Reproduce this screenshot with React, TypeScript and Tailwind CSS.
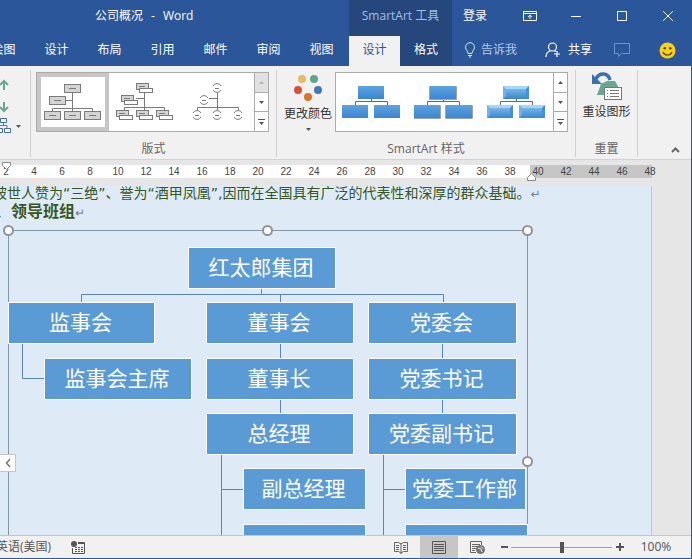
import React from "react";
import clsx from "clsx";

interface OrgNode {
	label: string;
	className: string;
}

const TABS = ["绘图", "设计", "布局", "引用", "邮件", "审阅", "视图"];
const RULER_INNER = [2, 4, 6, 8, 10, 12, 14, 16, 18, 20, 22, 24, 26, 28, 30, 32, 34, 36, 38];
const RULER_OUTER = [40, 42, 44, 46, 48];

// node positions are relative to the SmartArt canvas
const NODES: OrgNode[] = [
	{ label: "红太郎集团", className: "left-[180px] top-[17px] w-[148px]" },
	{ label: "监事会", className: "left-0 top-[72px] w-[147px]" },
	{ label: "董事会", className: "left-[198px] top-[72px] w-[148px]" },
	{ label: "党委会", className: "left-[360px] top-[72px] w-[149px]" },
	{ label: "监事会主席", className: "left-[36px] top-[128px] w-[148px]" },
	{ label: "董事长", className: "left-[198px] top-[128px] w-[148px]" },
	{ label: "党委书记", className: "left-[360px] top-[128px] w-[149px]" },
	{ label: "总经理", className: "left-[198px] top-[183px] w-[148px]" },
	{ label: "党委副书记", className: "left-[360px] top-[183px] w-[149px]" },
	{ label: "副总经理", className: "left-[235px] top-[238px] w-[123px]" },
	{ label: "党委工作部", className: "left-[397px] top-[238px] w-[121px]" },
	{ label: "", className: "left-[235px] top-[294px] w-[123px]" },
	{ label: "", className: "left-[397px] top-[294px] w-[123px]" },
];

const HANDLES = [
	"-left-[6px] -top-[6px]",
	"left-[253px] -top-[6px]",
	"-right-[6px] -top-[6px]",
	"-right-[6px] top-[225px]",
];

const WindowButton = ({ label, children }: { label: string; children: React.ReactNode }) => (
	<button type="button" aria-label={label} className="flex w-[46px] items-center justify-center">
		<svg width="14" height="12" viewBox="0 0 14 12" fill="none" stroke="#fff">
			{children}
		</svg>
	</button>
);

const TitleBar = () => (
	<div className="flex h-9 items-stretch text-white">
		<div className="flex w-[349px] shrink-0 items-center overflow-hidden pb-1 pl-[95px]">
			<h1 className="flex gap-2 text-xs">
				<span>公司概况</span>
				<span>-</span>
				<span>Word</span>
			</h1>
		</div>
		<div className="flex w-[103px] shrink-0 items-center justify-center bg-[#25477b] pb-1 text-[#a3bde3]">
			SmartArt 工具
		</div>
		<button type="button" className="px-[11px] pb-1">登录</button>
		<div className="ml-auto flex pb-1">
			<WindowButton label="功能区显示选项">
				<path d="M.5 1.5h13v9H.5zM.5 3.5h13M7 9V5M5 7l2-2 2 2" />
			</WindowButton>
			<WindowButton label="最小化">
				<path d="M2 6.5h10" />
			</WindowButton>
			<WindowButton label="最大化">
				<path d="M2.500 1.500h9v9h-9z" />
			</WindowButton>
			<WindowButton label="关闭">
				<path d="M2 1l10 10M12 1L2 11" />
			</WindowButton>
		</div>
	</div>
);

const TabRow = () => (
	<nav className="flex h-[30px] items-stretch text-white">
		<div className="-ml-[23px] flex w-[372px] shrink-0">
			{TABS.map((tab) => (
				<button key={tab} type="button" className="w-[53px] pb-0.5">
					{tab}
				</button>
			))}
		</div>
		<button type="button" className="w-[51px] shrink-0 bg-[#f1f1f1] pb-0.5 text-[#2b579a]">设计</button>
		<button type="button" className="w-[52px] shrink-0 bg-[#25477b] pb-0.5">格式</button>
		<button type="button" className="flex items-center gap-1 pb-0.5 pl-3 text-[#b3c8e8]">
			<svg width="12" height="16" viewBox="0 0 12 16" fill="none" stroke="#dbe6f6">
				<path d="M4 11.500C4 9 1.500 8 1.500 5.200a4.500 4.500 0 0 1 9 0C10.500 8 8 9 8 11.500zM4 13.500h4M5 15h2" />
			</svg>
			<span className="pl-px">告诉我</span>
		</button>
		<div className="ml-auto flex items-center pb-0.5 pr-[15px]">
			<button type="button" className="flex items-center gap-[7px]">
				<svg width="16" height="16" viewBox="0 0 16 16" fill="none" stroke="#fff" strokeWidth="1.200">
					<circle cx="7.500" cy="5" r="4" />
					<path d="M1 15c0-3.500 2-5.500 4.500-6.300M9.500 8.700l1.500.8M12 9v6M9 12h6" />
				</svg>
				共享
			</button>
			<button type="button" aria-label="批注" className="ml-[21px]">
				<svg width="18" height="16" viewBox="0 0 18 16" fill="none" stroke="#6f93cc">
					<path d="M1.500 1.500h15v10h-8l-3 3v-3h-4z" />
				</svg>
			</button>
			<button type="button" aria-label="反馈" className="ml-7">
				<svg width="17" height="17" viewBox="0 0 17 17">
					<circle cx="8.500" cy="8.500" r="8" fill="#fbd116" />
					<circle cx="5.700" cy="6.300" r="1.200" fill="#4a3c12" />
					<circle cx="11.300" cy="6.300" r="1.200" fill="#4a3c12" />
					<path d="M4 10c1.500 4 7.500 4 9 0" fill="none" stroke="#4a3c12" strokeWidth="1.200" />
				</svg>
			</button>
		</div>
	</nav>
);

const GalleryScroll = ({ topDisabled }: { topDisabled?: boolean }) => (
	<div className="flex w-[14px] shrink-0 flex-col divide-y divide-[#ababab] border-l border-[#ababab]">
		<button
			type="button"
			aria-label="上一行"
			className={clsx("flex flex-1 items-center justify-center", topDisabled && "bg-[#e1e1e1]")}
		>
			<svg width="5" height="3" viewBox="0 0 5 3" fill={topDisabled ? "#b5b5b5" : "#555"}>
				<path d="M0 3L2.500 0 5 3z" />
			</svg>
		</button>
		<button type="button" aria-label="下一行" className="flex flex-1 items-center justify-center">
			<svg width="5" height="3" viewBox="0 0 5 3" fill="#555">
				<path d="M0 0h5L2.500 3z" />
			</svg>
		</button>
		<button type="button" aria-label="其他" className="flex flex-1 items-center justify-center">
			<svg width="7" height="6" viewBox="0 0 7 6" fill="#555">
				<path d="M0 0h7v1H0zM1 3h5L3.500 6z" />
			</svg>
		</button>
	</div>
);

const BOXES = [[20, 0], [5, 12], [0, 27], [20, 27], [40, 27]];

const LayoutBoxes = () => (
	<svg width="58" height="37" viewBox="0 0 58 37" fill="none" stroke="#7b7b7b">
		<path d="M28.500 9v18M22 16.500h6M8.500 27v-2.500h40V27" />
		{BOXES.map(([x, y]) => (
			<g key={`${x}-${y}`}>
				<rect x={x + 0.5} y={y + 0.5} width="16" height="8" fill="#d4d4d4" />
				<path d={`M${x + 5} ${y + 4.5}h7`} />
			</g>
		))}
	</svg>
);

const LayoutNamed = () => (
	<svg width="58" height="38" viewBox="0 0 58 38" fill="none" stroke="#7b7b7b">
		<path d="M28.500 9v18M20 15.500h8M8.500 27v-2.500h40V27" />
		{BOXES.map(([x, y]) => (
			<g key={`${x}-${y}`}>
				<rect x={x + 0.5} y={y + 0.5} width="12" height="6" fill="#d4d4d4" />
				<path d={`M${x + 3} ${y + 3.5}h6`} />
				<rect x={x + 3.5} y={y + 5.5} width="13" height="4" fill="#fff" />
			</g>
		))}
	</svg>
);

const CIRCLES = [[25, 5], [12, 17], [5, 32], [25, 32], [46, 32]];

const LayoutCircles = () => (
	<svg width="52" height="38" viewBox="0 0 52 38" fill="none" stroke="#7b7b7b">
		<path d="M25.500 10v17M17 15.500h8M5.500 27v-2.500h41V27" />
		{CIRCLES.map(([x, y]) => (
			<g key={`${x}-${y}`}>
				<path d={`M${x - 4} ${y - 2}a4.500 4.500 0 0 1 8 0M${x - 4} ${y + 2}a4.500 4.500 0 0 0 8 0`} />
				<path d={`M${x - 2} ${y + 0.5}h4`} />
			</g>
		))}
	</svg>
);

const StyleThumb = ({ variant }: { variant: "flat" | "shadow" | "gloss" }) => (
	<svg width="60" height="35" viewBox="0 0 60 35">
		<defs>
			<linearGradient id={`fill-${variant}`} x1="0" y1="0" x2="0" y2="1">
				<stop offset="0" stopColor={variant === "gloss" ? "#86c3f1" : "#5ea3e0"} />
				<stop offset="1" stopColor="#3b86cf" />
			</linearGradient>
		</defs>
		<path d="M29.500 14v3M13.500 20v-3.500h32V20" fill="none" stroke="#5b6b7d" />
		{[[16, 1], [0, 20], [32, 20]].map(([x, y]) => (
			<g key={`${x}-${y}`}>
				{variant === "shadow" && <rect x={x - 1} y={y} width="28" height="14" rx="1" fill="#9aa5b1" />}
				<rect x={x} y={y} width="26" height="13" fill={`url(#fill-${variant})`} />
				{variant === "gloss" && (
					<>
						<path d={`M${x} ${y}h26l-3 3h-20z`} fill="#a5d5f7" />
						<path d={`M${x} ${y}l3 3v7l-3 3z`} fill="#70b3ea" />
						<path d={`M${x + 26} ${y}l-3 3v7l3 3z`} fill="#4590d6" />
					</>
				)}
			</g>
		))}
	</svg>
);

const GroupCaption = ({ children }: { children: React.ReactNode }) => (
	<div className="mt-auto text-center leading-4 text-[#666]">{children}</div>
);

const DownCaret = () => (
	<svg width="5" height="3" viewBox="0 0 5 3" fill="#555">
		<path d="M0 0h5L2.500 3z" />
	</svg>
);

const Ribbon = () => (
	<section className="flex h-[94px] shrink-0 border-b border-[#d2d2d2] bg-[#f1f1f1] pb-0.5 pt-1 text-[#333]">
		<div className="flex w-[31px] shrink-0 flex-col border-r border-[#d0d0d0] pt-1">
			<button type="button" aria-label="上移" className="-ml-1 h-[22px] w-4">
				<svg width="13" height="12" viewBox="0 0 13 12" fill="none" stroke="#6aa78f" strokeWidth="2">
					<path d="M8 11V2M4 6l4-4 4 4" />
				</svg>
			</button>
			<button type="button" aria-label="下移" className="-ml-1 h-[22px] w-4">
				<svg width="13" height="12" viewBox="0 0 13 12" fill="none" stroke="#6aa78f" strokeWidth="2">
					<path d="M8 1v9M4 6l4 4 4-4" />
				</svg>
			</button>
			<button type="button" aria-label="组织结构图布局" className="flex items-center gap-[5px]">
				<svg width="11" height="16" viewBox="0 0 11 16" fill="#fff" stroke="#3b6cb4">
					<path d="M3.500 5v3M-3 10V7.500h10V10" fill="none" stroke="#777" />
					<path d="M.5.500h6v4h-6zM-3.500 10.500h6v4h-6zM4.500 10.500h6v4h-6z" />
				</svg>
				<DownCaret />
			</button>
		</div>
		<div className="flex w-[246px] shrink-0 flex-col border-r border-[#d0d0d0] px-[5px] pt-0.5">
			<div className="flex h-[60px] w-[233px] border border-[#ababab] bg-white">
				<button type="button" aria-label="组织结构图" className="flex w-[72px] items-center justify-center border-4 border-[#c6c6c6]">
					<LayoutBoxes />
				</button>
				<button type="button" aria-label="姓名和职务组织结构图" className="flex w-[72px] items-center justify-center">
					<LayoutNamed />
				</button>
				<button type="button" aria-label="半圆组织结构图" className="flex flex-1 items-center justify-center">
					<LayoutCircles />
				</button>
				<GalleryScroll topDisabled />
			</div>
			<GroupCaption>版式</GroupCaption>
		</div>
		<div className="flex w-[299px] shrink-0 flex-col border-r border-[#d0d0d0] pt-0.5">
			<div className="flex pl-1">
				<button type="button" className="flex w-[54px] flex-col items-center">
					<svg width="30" height="28" viewBox="0 0 30 28" className="mt-0.5">
						<circle cx="9" cy="5" r="4" fill="#e8b767" />
						<circle cx="21" cy="5" r="4" fill="#60a58a" />
						<circle cx="5" cy="16" r="4" fill="#d2533a" />
						<circle cx="25" cy="16" r="4" fill="#447ab5" />
						<circle cx="15" cy="23" r="4" fill="#dc7426" />
					</svg>
					<span className="mt-0.5 leading-5">更改颜色</span>
					<span className="mt-1">
						<DownCaret />
					</span>
				</button>
				<div className="flex h-[60px] w-[233px] border border-[#ababab] bg-white">
					<button type="button" aria-label="简单填充" className="flex w-[72px] items-center justify-center">
						<StyleThumb variant="flat" />
					</button>
					<button type="button" aria-label="中等效果" className="flex w-[72px] items-center justify-center">
						<StyleThumb variant="shadow" />
					</button>
					<button type="button" aria-label="优雅" className="flex flex-1 items-center justify-center">
						<StyleThumb variant="gloss" />
					</button>
					<GalleryScroll />
				</div>
			</div>
			<GroupCaption>SmartArt 样式</GroupCaption>
		</div>
		<div className="flex w-[62px] shrink-0 flex-col border-r border-[#d0d0d0] pt-0.5">
			<button type="button" className="flex flex-col items-center">
				<svg width="32" height="30" viewBox="0 0 32 30">
					<path d="M6 23L10 12l6-3h8l5 9-4 5z" fill="#6aa78f" />
					<path d="M5 7C8 .500 17 0 19 8" fill="none" stroke="#3a6fb0" strokeWidth="3.500" />
					<path d="M1 2v10h10z" fill="#3a6fb0" />
					<rect x="13.500" y="15.500" width="17" height="12" fill="#fff" stroke="#777" />
					<path d="M16 18.500h1M19 18.500h9M16 21.500h1M19 21.500h9M16 24.500h1M19 24.500h9" stroke="#777" />
				</svg>
				<span className="leading-5">重设图形</span>
			</button>
			<GroupCaption>重置</GroupCaption>
		</div>
		<button type="button" aria-label="折叠功能区" className="ml-auto mr-[11px] self-end pb-1">
			<svg width="9" height="6" viewBox="0 0 9 6" fill="none" stroke="#666" strokeWidth="2">
				<path d="M1 5l3.500-3.500L8 5" />
			</svg>
		</button>
	</section>
);

const Ruler = () => (
	<div className="relative h-[26px] shrink-0 pt-[5px] font-['Liberation_Sans',sans-serif] text-[10px] text-[#444]">
		<div className="flex h-[13px] leading-[14px]">
			<div className="flex w-[530px] shrink-0 bg-white">
				<div className="-ml-2 flex">
					{RULER_INNER.map((n) => (
						<span key={n} className="w-7 text-center">{n}</span>
					))}
				</div>
			</div>
			<div className="flex w-[122px] shrink-0 bg-[#c6c6c6]">
				<div className="-ml-1.5 flex">
					{RULER_OUTER.map((n) => (
						<span key={n} className="w-7 text-center">{n}</span>
					))}
				</div>
			</div>
		</div>
		<svg width="10" height="9" viewBox="0 0 10 9" fill="#fff" stroke="#888" className="absolute left-[2px] top-[2px]">
			<path d="M.5.500h8v3l-4 4-4-4z" />
		</svg>
		<svg width="10" height="9" viewBox="0 0 10 9" fill="#fff" stroke="#888" className="absolute left-[527px] top-[13px]">
			<path d="M.5 7.500h8v-3l-4-4-4 4z" />
		</svg>
	</div>
);

const SmartArt = () => (
	<div className="relative ml-2 mt-[9px] h-[340px] w-[520px] shrink-0 border border-[#8496a5]">
		<svg width="520" height="340" viewBox="0 0 520 340" fill="none" stroke="#5b84b8" className="absolute -left-px -top-px">
			<path d="M253.500 58v7M73.500 72v-7.500h362V72M272.500 64v8" />
			<path d="M14.500 113v35.500H36M272.500 113v15M272.500 169v14M434.500 113v15M434.500 169v14" />
			<path d="M213.500 224v120M213.500 259.500H235M375.500 224v120M375.500 259.500H397" />
		</svg>
		{NODES.map((node, idx) => (
			<div
				key={idx}
				className={clsx(
					"absolute -mt-px -ml-px flex h-[42px] items-center justify-center whitespace-nowrap border border-white bg-[#5b9bd5] pb-0.5 pr-0.5 text-[21px] leading-none text-white",
					node.className
				)}
			>
				{node.label}
			</div>
		))}
		{HANDLES.map((pos) => (
			<span key={pos} className={clsx("absolute size-[11px] rounded-full border-2 border-[#929292] bg-white", pos)} />
		))}
	</div>
);

const DocumentArea = () => (
	<main className="relative min-h-0 flex-1 overflow-hidden">
		<article className="flex h-full w-[652px] flex-col border-r border-[#c6c6c6] bg-[#deeaf6] text-[#375623]">
			<p className="-ml-[7px] whitespace-nowrap font-['DejaVu_Sans','Noto_Sans_CJK_SC',sans-serif] text-sm leading-[15px]">
				被世人赞为“三绝”、誉为“酒甲凤凰”,因而在全国具有广泛的代表性和深厚的群众基础。
				<span className="text-xs text-[#6d7f95]">↵</span>
			</p>
			<h2 className="-ml-[5px] whitespace-nowrap text-base font-bold leading-[18px]">
				、领导班组
				<span className="text-xs font-normal text-[#6d7f95]">↵</span>
			</h2>
			<SmartArt />
		</article>
		<button
			type="button"
			aria-label="展开文本窗格"
			className="absolute left-0 top-[268px] flex h-[18px] w-4 items-center justify-center border border-l-0 border-[#c6c6c6] bg-white"
		>
			<svg width="6" height="10" viewBox="0 0 6 10" fill="none" stroke="#777" strokeWidth="1.500">
				<path d="M5 1L1.500 5 5 9" />
			</svg>
		</button>
	</main>
);

const StatusBar = () => (
	<footer className="flex h-[23px] shrink-0 items-stretch border-t border-[#c6c6c6] bg-[#f1f1f1] text-[#555]">
		<button type="button" className="-ml-1 whitespace-nowrap">英语(美国)</button>
		<button type="button" aria-label="宏录制" className="ml-5">
			<svg width="14" height="13" viewBox="0 0 14 13" fill="none" stroke="#555">
				<circle cx="3" cy="3" r="3" fill="#555" stroke="none" />
				<path d="M7 1.500h6.500M7 2.500h6.500M1.500 7v5.500h12v-11" />
				<path d="M4 6.500h8M4 8.500h8M4 10.500h8" strokeDasharray="2 1" />
			</svg>
		</button>
		<div className="ml-auto flex items-stretch">
			<button type="button" aria-label="阅读视图" className="flex w-[39px] items-center justify-center">
				<svg width="14" height="13" viewBox="0 0 14 13" fill="none" stroke="#666">
					<path d="M7 2v11M.5 1.500h4L7 3l2.500-1.500h4v9h-4L7 12l-2.500-1.500h-4z" />
					<path d="M2 4.500h3M2 6.500h3M2 8.500h3M9 4.500h3M9 6.500h3M9 8.500h3" />
				</svg>
			</button>
			<button type="button" aria-label="页面视图" className="flex w-[38px] items-center justify-center bg-[#c6c6c6]">
				<svg width="14" height="13" viewBox="0 0 14 13" fill="none" stroke="#555">
					<path d="M.5.500h13v12H.5zM2 3.500h10M2 5.500h10M2 7.500h10M2 9.500h10" />
				</svg>
			</button>
			<button type="button" aria-label="Web 版式视图" className="flex w-[38px] items-center justify-center">
				<svg width="15" height="13" viewBox="0 0 15 13" fill="none" stroke="#666">
					<path d="M6 11.500H.5V.500h11V4M2 3.500h8M2 5.500h6M2 7.500h4M2 9.500h3" />
					<circle cx="10.500" cy="8.500" r="4" fill="#777" stroke="#666" />
					<path d="M8 7l3 1 1 3M11 5.500l2 2" stroke="#f1f1f1" />
				</svg>
			</button>
			<button type="button" aria-label="缩小" className="ml-1 flex w-[9px] items-center justify-center">
				<svg width="7" height="2" viewBox="0 0 7 2">
					<path d="M0 0h7v2H0z" fill="#555" />
				</svg>
			</button>
			<input
				type="range"
				min={0}
				max={100}
				defaultValue={50}
				aria-label="显示比例"
				className="mx-[2px] w-[101px] appearance-none bg-transparent [&::-webkit-slider-runnable-track]:h-px [&::-webkit-slider-runnable-track]:bg-[#a0a0a0] [&::-webkit-slider-thumb]:-mt-[5px] [&::-webkit-slider-thumb]:h-[11px] [&::-webkit-slider-thumb]:w-1 [&::-webkit-slider-thumb]:appearance-none [&::-webkit-slider-thumb]:bg-[#555]"
			/>
			<button type="button" aria-label="放大" className="flex w-[11px] items-center justify-center">
				<svg width="8" height="8" viewBox="0 0 8 8">
					<path d="M0 3h8v2H0zM3 0h2v8H3z" fill="#555" />
				</svg>
			</button>
			<button type="button" className="w-[66px] pr-1">100%</button>
		</div>
	</footer>
);

const App: React.FC = () => {
	return (
		<div
			lang="zh-CN"
			className="flex h-screen flex-col overflow-hidden border-b border-r border-[#2b579a] bg-[#e6e6e6] font-['Open_Sans','Noto_Sans_CJK_SC',sans-serif] text-xs"
		>
			<header className="shrink-0 bg-[#2b579a]">
				<TitleBar />
				<TabRow />
			</header>
			<Ribbon />
			<Ruler />
			<DocumentArea />
			<StatusBar />
		</div>
	);
};

export default App;
